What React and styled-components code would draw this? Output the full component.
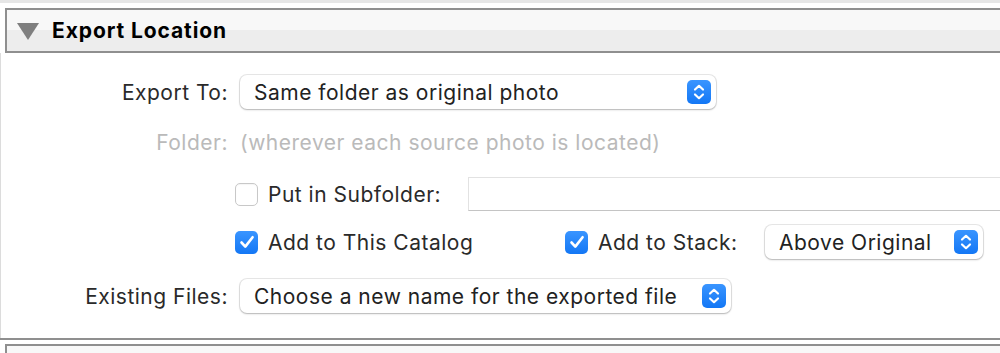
import React from "react";
import styled, { createGlobalStyle } from "styled-components";

const GlobalStyle = createGlobalStyle`
  html, body {
    margin: 0;
    padding: 0;
    background: #ffffff;
  }
  body {
    font-family: Inter, "Noto Sans", "Liberation Sans", sans-serif;
    color: #262626;
    overflow: hidden;
  }
`;

function Stepper() {
  return (
    <StepperBox>
      <svg width="24" height="24" viewBox="0 0 24 24">
        <path
          d="M8 9.5 L12 5.8 L16 9.5 M8 14.5 L12 18.2 L16 14.5"
          fill="none"
          stroke="#fff"
          strokeWidth="2.2"
          strokeLinecap="round"
          strokeLinejoin="round"
        />
      </svg>
    </StepperBox>
  );
}

function Check({ checked }) {
  return (
    <CheckBox checked={checked}>
      {checked && (
        <svg width="22" height="22" viewBox="0 0 22 22">
          <path
            d="M5.5 11.5 L9.3 15.6 L16.6 6.2"
            fill="none"
            stroke="#fff"
            strokeWidth="2.6"
            strokeLinecap="round"
            strokeLinejoin="round"
          />
        </svg>
      )}
    </CheckBox>
  );
}

function Popup({ value, width }) {
  return (
    <PopupButton width={width}>
      <span>{value}</span>
      <Stepper />
    </PopupButton>
  );
}

export default function App() {
  return (
    <Page>
      <GlobalStyle />
      <TopStrip />
      <SectionHeader>
        <Triangle />
        <HeaderTitle>Export Location</HeaderTitle>
      </SectionHeader>
      <Body>
        <Form>
          <Row top={22}>
            <Label>Export To:</Label>
            <Popup value="Same folder as original photo" width={476} />
          </Row>
          <Row top={21}>
            <Label disabled>Folder:</Label>
            <Muted>(wherever each source photo is located)</Muted>
          </Row>
          <Row top={22}>
            <span />
            <CheckRow>
              <CheckItem width={233}>
                <Check />
                <CheckLabel>Put in Subfolder:</CheckLabel>
              </CheckItem>
              <TextField />
            </CheckRow>
          </Row>
          <Row top={14}>
            <span />
            <CheckRow>
              <CheckItem width={330}>
                <Check checked />
                <CheckLabel>Add to This Catalog</CheckLabel>
              </CheckItem>
              <CheckItem width={200}>
                <Check checked />
                <CheckLabel>Add to Stack:</CheckLabel>
              </CheckItem>
              <Popup value="Above Original" width={218} />
            </CheckRow>
          </Row>
          <Row top={20}>
            <Label>Existing Files:</Label>
            <Popup value="Choose a new name for the exported file" width={491} />
          </Row>
        </Form>
      </Body>
      <BottomRule />
      <NextHeader />
    </Page>
  );
}

const Page = styled.div`
  width: 1000px;
  height: 353px;
  overflow: hidden;
  display: flex;
  flex-direction: column;
`;

const TopStrip = styled.div`
  height: 3px;
  background: #e6e6e6;
  margin-bottom: 5px;
  flex-shrink: 0;
`;

const SectionHeader = styled.div`
  flex-shrink: 0;
  height: 41px;
  margin-left: 5px;
  margin-right: -10px;
  border: 2px solid #8f8f8f;
  background: linear-gradient(#f8f8f8 0, #f8f8f8 20px, #ededed 20px, #ededed 100%);
  display: flex;
  align-items: center;
  padding-left: 10px;
  gap: 13px;
`;

const Triangle = styled.div`
  width: 0;
  height: 0;
  border-left: 11px solid transparent;
  border-right: 11px solid transparent;
  border-top: 17px solid #7f7f7f;
  margin-top: 1px;
`;

const HeaderTitle = styled.div`
  font-size: 21px;
  font-weight: 700;
  color: #000;
  letter-spacing: 0.9px;
`;

const Body = styled.div`
  height: 285px;
  flex-shrink: 0;
  border-left: 1px solid #dcdcdc;
  box-sizing: border-box;
`;

const Form = styled.div`
  display: grid;
  grid-template-columns: 227px 1fr;
  column-gap: 12px;
  align-items: center;
`;

const Row = styled.div`
  display: contents;
  & > * {
    margin-top: ${(p) => p.top}px;
  }
`;

const Label = styled.div`
  text-align: right;
  font-size: 21px;
  letter-spacing: 0.5px;
  color: ${(p) => (p.disabled ? "#bababa" : "#2a2a2a")};
  white-space: nowrap;
`;

const Muted = styled.div`
  font-size: 21px;
  letter-spacing: 0.5px;
  color: #bababa;
  white-space: nowrap;
`;

const PopupButton = styled.div`
  width: ${(p) => p.width}px;
  height: 34px;
  box-sizing: border-box;
  border-radius: 7px;
  background: #fff;
  box-shadow: 0 0 0 1px rgba(0, 0, 0, 0.09), 0 1px 2px rgba(0, 0, 0, 0.22);
  display: flex;
  align-items: center;
  justify-content: space-between;
  padding: 0 5px 0 14px;
  font-size: 21px;
  letter-spacing: 0.5px;
  color: #222;
  white-space: nowrap;
  flex-shrink: 0;
`;

const StepperBox = styled.div`
  width: 24px;
  height: 24px;
  border-radius: 5px;
  background: linear-gradient(#3a95ff, #1377f5);
  display: flex;
  align-items: center;
  justify-content: center;
  flex-shrink: 0;
`;

const CheckRow = styled.div`
  display: flex;
  align-items: center;
  margin-left: -5px;
`;

const CheckItem = styled.div`
  display: flex;
  align-items: center;
  gap: 10px;
  width: ${(p) => p.width}px;
  flex-shrink: 0;
`;

const CheckBox = styled.div`
  width: 23px;
  height: 23px;
  box-sizing: border-box;
  border-radius: 5px;
  flex-shrink: 0;
  display: flex;
  align-items: center;
  justify-content: center;
  background: ${(p) => (p.checked ? "linear-gradient(#3a95ff, #1377f5)" : "#fff")};
  border: ${(p) => (p.checked ? "none" : "1px solid #c8c8c8")};
  box-shadow: ${(p) => (p.checked ? "none" : "inset 0 1px 1px rgba(0,0,0,0.04)")};
`;

const CheckLabel = styled.span`
  font-size: 21px;
  letter-spacing: 0.5px;
  color: #2a2a2a;
  white-space: nowrap;
`;

const TextField = styled.div`
  flex: 1;
  height: 34px;
  margin-right: -40px;
  box-sizing: border-box;
  background: #fff;
  border: 1px solid #e2e2e2;
  border-bottom: 1px solid #c4c4c4;
`;

const BottomRule = styled.div`
  height: 2px;
  background: #8f8f8f;
  flex-shrink: 0;
`;

const NextHeader = styled.div`
  margin-top: 4px;
  margin-left: 5px;
  margin-right: -10px;
  height: 20px;
  flex-shrink: 0;
  border: 2px solid #8f8f8f;
  border-bottom: none;
  background: #f8f8f8;
`;
